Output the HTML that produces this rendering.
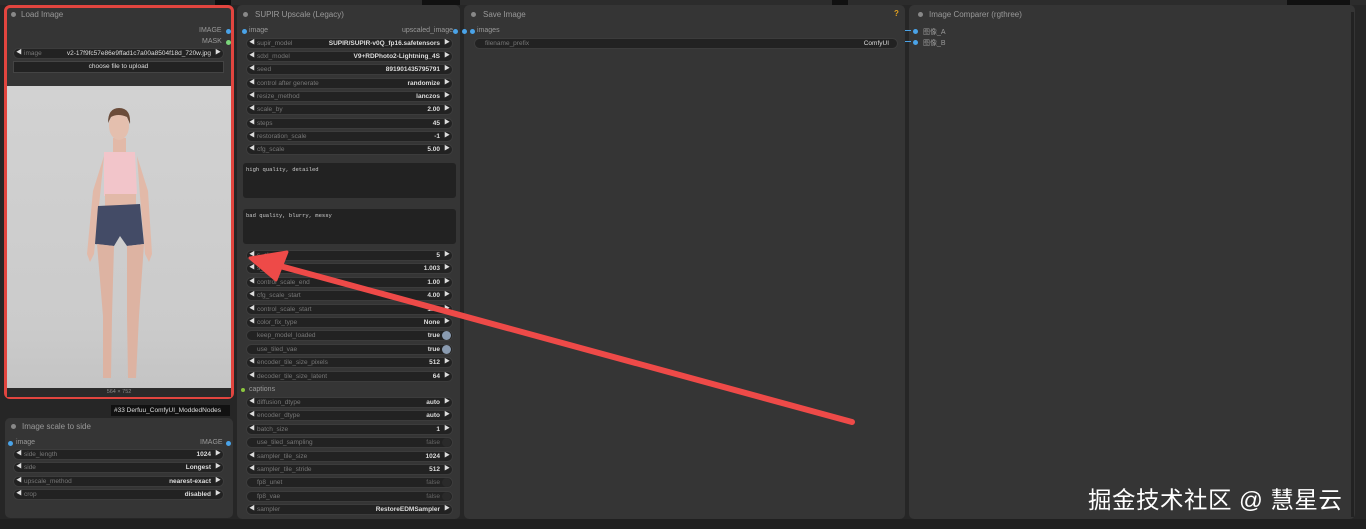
<!DOCTYPE html>
<html><head><meta charset="utf-8">
<style>
*{margin:0;padding:0;box-sizing:border-box}
body{width:1366px;height:529px;background:#262626;font-family:"Liberation Sans","Noto Sans CJK SC",sans-serif;position:relative;overflow:hidden}
.n{position:absolute;background:#353535;border-radius:5px}
.t{position:absolute;font-size:8px;color:#999}
.dot{position:absolute;width:5px;height:5px;border-radius:50%;background:#888}
.w{position:absolute;height:11px;border-radius:6px;background:#222;border:1px solid #3c3c3c;font-size:6.5px;line-height:9px;color:#777}
.w .l{position:absolute;left:10px}
.w .v{position:absolute;right:12px;color:#ddd;font-weight:bold}
.w:before{content:"◀";position:absolute;left:2px;color:#ddd;font-size:6px}
.w:after{content:"▶";position:absolute;right:2px;color:#ddd;font-size:6px}
.w.b:before,.w.b:after{content:""}
.w.b .v{right:12px}
.w.b .tg{position:absolute;right:1px;top:0;width:9px;height:9px;border-radius:50%;background:#8a9bb0}
.w.b.f .tg{background:#2a2a2a}
.w.b.f .v{color:#666;font-weight:normal}
.sock{position:absolute;width:5px;height:5px;border-radius:50%;background:#4aa3e8}
.ta{position:absolute;background:#222;border-radius:3px;font-family:"Liberation Mono",monospace;font-size:5.5px;color:#ccc;padding:3px}
</style></head><body>
<div style="position:absolute;left:0;top:0;width:1366px;height:5px;background:#2c2c2c"></div>
<div style="position:absolute;left:0;top:519px;width:1366px;height:10px;background:#202020"></div>

<!-- Load Image -->
<div class="n" style="left:4px;top:5px;width:230px;height:394px;border:3px solid #e2453f;border-radius:6px"></div>
<div class="dot" style="left:11px;top:12px"></div>
<div class="t" style="left:21px;top:10px">Load Image</div>
<div class="t" style="left:199px;top:27px;font-size:7px">IMAGE</div>
<div class="sock" style="left:226px;top:29px"></div>
<div class="t" style="left:202px;top:38px;font-size:7px">MASK</div>
<div class="sock" style="left:226px;top:40px;background:#7bd67b"></div>
<div class="w" style="left:13px;top:48px;width:211px"><span class="l">image</span><span class="v" style="font-weight:normal">v2-17f9fc57e86e9ffad1c7a00a8504f18d_720w.jpg</span></div>
<div style="position:absolute;left:13px;top:61px;width:211px;height:12px;background:#222;border:1px solid #444;font-size:6.5px;color:#ddd;text-align:center;line-height:10px">choose file to upload</div>
<div style="position:absolute;left:7px;top:86px;width:224px;height:302px;background:linear-gradient(#d2d2d2,#cbcbcb 80%,#c4c4c4);overflow:hidden">
<svg width="224" height="302" viewBox="0 0 224 302">
<path d="M97 70 L86 105 L80 168 L83 176 L87 168 L93 110 Z" fill="#e2b9a8"/>
<path d="M130 70 L141 105 L145 168 L142 176 L138 168 L133 110 Z" fill="#e2b9a8"/>
<rect x="106" y="52" width="13" height="16" fill="#e2b9a8"/>
<ellipse cx="112" cy="40" rx="10" ry="14" fill="#e4bfae"/>
<path d="M101 37 Q101 22 112 22 Q124 22 123 38 L120 31 Q111 27 104 31 Z" fill="#6b4c3a"/>
<path d="M97 66 L128 66 L130 108 L97 110 Z" fill="#f2c5ca"/>
<rect x="98" y="108" width="31" height="13" fill="#e2b9a8"/>
<path d="M91 120 L133 118 L137 158 L120 160 L113 150 L107 160 L88 158 Z" fill="#434b66"/>
<path d="M90 158 L107 160 L105 230 L104 292 L96 292 L96 230 Z" fill="#ddb3a2"/>
<path d="M120 160 L137 158 L132 230 L129 292 L121 292 L120 230 Z" fill="#ddb3a2"/>
</svg></div>
<div style="position:absolute;left:7px;top:388px;width:224px;height:9px;background:#2a2a2a;font-size:5.5px;color:#888;text-align:center;line-height:9px">564 × 752</div>
<div style="position:absolute;left:111px;top:405px;width:119px;height:11px;background:#111;color:#ddd;font-size:6.5px;line-height:11px;padding-left:3px">#33 Derfuu_ComfyUI_ModdedNodes</div>

<!-- Image scale to side -->
<div class="n" style="left:5px;top:418px;width:228px;height:100px"></div>
<div class="dot" style="left:11px;top:424px"></div>
<div class="t" style="left:22px;top:422px">Image scale to side</div>
<div class="sock" style="left:8px;top:441px"></div>
<div class="t" style="left:16px;top:439px;font-size:7px">image</div>
<div class="t" style="left:200px;top:439px;font-size:7px">IMAGE</div>
<div class="sock" style="left:226px;top:441px"></div>
<div class="w" style="left:13px;top:449px;width:211px"><span class="l">side_length</span><span class="v">1024</span></div>
<div class="w" style="left:13px;top:462px;width:211px"><span class="l">side</span><span class="v">Longest</span></div>
<div class="w" style="left:13px;top:476px;width:211px"><span class="l">upscale_method</span><span class="v">nearest-exact</span></div>
<div class="w" style="left:13px;top:489px;width:211px"><span class="l">crop</span><span class="v">disabled</span></div>

<!-- SUPIR -->
<div class="n" style="left:237px;top:5px;width:223px;height:514px"></div>
<div style="position:absolute;left:215px;top:0;width:16px;height:5px;background:#111"></div>
<div style="position:absolute;left:422px;top:0;width:38px;height:5px;background:#111"></div>
<div class="dot" style="left:243px;top:12px"></div>
<div class="t" style="left:255px;top:10px">SUPIR Upscale (Legacy)</div>
<div class="sock" style="left:242px;top:29px"></div>
<div class="t" style="left:249px;top:27px;font-size:7px">image</div>
<div class="t" style="left:402px;top:27px;font-size:7px">upscaled_image</div>
<div class="sock" style="left:453px;top:29px"></div>
<div class="w" style="left:246px;top:38px;width:207px"><span class="l">supir_model</span><span class="v">SUPIR/SUPIR-v0Q_fp16.safetensors</span></div>
<div class="w" style="left:246px;top:51px;width:207px"><span class="l">sdxl_model</span><span class="v">V9+RDPhoto2-Lightning_4S</span></div>
<div class="w" style="left:246px;top:64px;width:207px"><span class="l">seed</span><span class="v">891901435795791</span></div>
<div class="w" style="left:246px;top:78px;width:207px"><span class="l">control after generate</span><span class="v">randomize</span></div>
<div class="w" style="left:246px;top:91px;width:207px"><span class="l">resize_method</span><span class="v">lanczos</span></div>
<div class="w" style="left:246px;top:104px;width:207px"><span class="l">scale_by</span><span class="v">2.00</span></div>
<div class="w" style="left:246px;top:118px;width:207px"><span class="l">steps</span><span class="v">45</span></div>
<div class="w" style="left:246px;top:131px;width:207px"><span class="l">restoration_scale</span><span class="v">-1</span></div>
<div class="w" style="left:246px;top:144px;width:207px"><span class="l">cfg_scale</span><span class="v">5.00</span></div>
<div class="ta" style="left:243px;top:163px;width:213px;height:35px">high quality, detailed</div>
<div class="ta" style="left:243px;top:209px;width:213px;height:35px">bad quality, blurry, messy</div>
<div class="w" style="left:246px;top:250px;width:207px"><span class="l">s_churn</span><span class="v">5</span></div>
<div class="w" style="left:246px;top:263px;width:207px"><span class="l">s_noise</span><span class="v">1.003</span></div>
<div class="w" style="left:246px;top:277px;width:207px"><span class="l">control_scale_end</span><span class="v">1.00</span></div>
<div class="w" style="left:246px;top:290px;width:207px"><span class="l">cfg_scale_start</span><span class="v">4.00</span></div>
<div class="w" style="left:246px;top:304px;width:207px"><span class="l">control_scale_start</span><span class="v">1.00</span></div>
<div class="w" style="left:246px;top:317px;width:207px"><span class="l">color_fix_type</span><span class="v">None</span></div>
<div class="w b" style="left:246px;top:330px;width:207px"><span class="l">keep_model_loaded</span><span class="v">true</span><span class="tg"></span></div>
<div class="w b" style="left:246px;top:344px;width:207px"><span class="l">use_tiled_vae</span><span class="v">true</span><span class="tg"></span></div>
<div class="w" style="left:246px;top:357px;width:207px"><span class="l">encoder_tile_size_pixels</span><span class="v">512</span></div>
<div class="w" style="left:246px;top:371px;width:207px"><span class="l">decoder_tile_size_latent</span><span class="v">64</span></div>
<div class="dot" style="left:241px;top:388px;background:#8cc63f;width:4px;height:4px"></div>
<div class="t" style="left:249px;top:386px;font-size:7px">captions</div>
<div class="w" style="left:246px;top:397px;width:207px"><span class="l">diffusion_dtype</span><span class="v">auto</span></div>
<div class="w" style="left:246px;top:410px;width:207px"><span class="l">encoder_dtype</span><span class="v">auto</span></div>
<div class="w" style="left:246px;top:424px;width:207px"><span class="l">batch_size</span><span class="v">1</span></div>
<div class="w b f" style="left:246px;top:437px;width:207px"><span class="l">use_tiled_sampling</span><span class="v">false</span><span class="tg"></span></div>
<div class="w" style="left:246px;top:451px;width:207px"><span class="l">sampler_tile_size</span><span class="v">1024</span></div>
<div class="w" style="left:246px;top:464px;width:207px"><span class="l">sampler_tile_stride</span><span class="v">512</span></div>
<div class="w b f" style="left:246px;top:477px;width:207px"><span class="l">fp8_unet</span><span class="v">false</span><span class="tg"></span></div>
<div class="w b f" style="left:246px;top:491px;width:207px"><span class="l">fp8_vae</span><span class="v">false</span><span class="tg"></span></div>
<div class="w" style="left:246px;top:504px;width:207px"><span class="l">sampler</span><span class="v">RestoreEDMSampler</span></div>

<!-- Save Image -->
<div class="n" style="left:464px;top:5px;width:441px;height:514px"></div>
<div style="position:absolute;left:832px;top:0;width:16px;height:5px;background:#111"></div>
<div class="dot" style="left:471px;top:12px"></div>
<div class="t" style="left:483px;top:10px">Save Image</div>
<div class="t" style="left:894px;top:9px;color:#e0a020;font-weight:bold">?</div>
<div class="sock" style="left:462px;top:29px"></div>
<div class="sock" style="left:470px;top:29px"></div>
<div class="t" style="left:477px;top:27px;font-size:7px">images</div>
<div class="w b" style="left:474px;top:38px;width:424px"><span class="l">filename_prefix</span><span class="v" style="right:8px;font-weight:normal">ComfyUI</span></div>

<!-- Image Comparer -->
<div class="n" style="left:909px;top:5px;width:446px;height:514px"></div>
<div style="position:absolute;left:1287px;top:0;width:63px;height:5px;background:#111"></div>
<div style="position:absolute;left:1351px;top:12px;width:3px;height:505px;background:#222"></div>
<div class="dot" style="left:918px;top:12px"></div>
<div class="t" style="left:929px;top:10px">Image Comparer (rgthree)</div>
<div style="position:absolute;left:905px;top:30px;width:6px;height:1px;background:#4aa3e8"></div>
<div class="sock" style="left:913px;top:29px"></div>
<div class="t" style="left:923px;top:27px;font-size:7px">图像_A</div>
<div style="position:absolute;left:905px;top:41px;width:6px;height:1px;background:#4aa3e8"></div>
<div class="sock" style="left:913px;top:40px"></div>
<div class="t" style="left:923px;top:38px;font-size:7px">图像_B</div>

<!-- Arrow -->
<svg style="position:absolute;left:0;top:0" width="1366" height="529">
<line x1="852" y1="422" x2="280" y2="266" stroke="#ee4a48" stroke-width="6" stroke-linecap="round"/>
<path d="M250 258 L287 252 L276 280 Z" fill="#ee4a48" stroke="#ee4a48" stroke-width="3" stroke-linejoin="round"/>
</svg>

<div style="position:absolute;left:1088px;top:481px;font-size:23.5px;color:#fff;font-family:'Liberation Sans','Noto Sans CJK SC',sans-serif;letter-spacing:0.5px">掘金技术社区 @ 慧星云</div>
</body></html>
